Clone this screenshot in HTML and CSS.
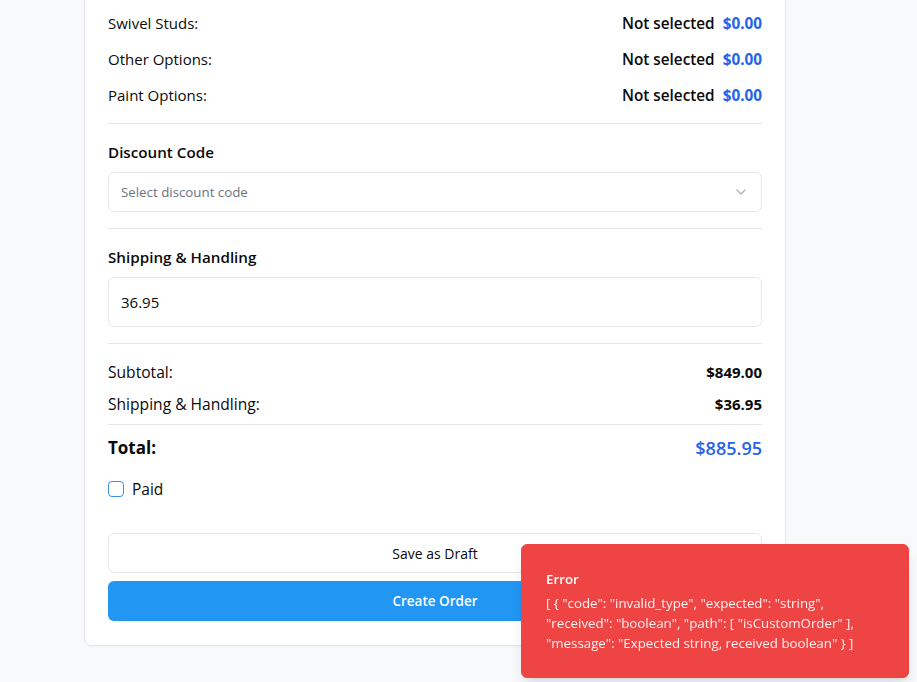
FILE: index.html
```html
<!DOCTYPE html>
<html lang="en">
<head>
<meta charset="utf-8">
<title>Order Summary</title>
<link rel="stylesheet" href="styles.css">
</head>
<body>
<div class="page">
  <div class="card">
    <div class="options">
      <div class="row">
        <span class="label">Swivel Studs:</span>
        <span class="value"><span class="sel">Not selected</span><span class="price">$0.00</span></span>
      </div>
      <div class="row">
        <span class="label">Other Options:</span>
        <span class="value"><span class="sel">Not selected</span><span class="price">$0.00</span></span>
      </div>
      <div class="row">
        <span class="label">Paint Options:</span>
        <span class="value"><span class="sel">Not selected</span><span class="price">$0.00</span></span>
      </div>
    </div>

    <div class="section">
      <div class="field-label">Discount Code</div>
      <div class="select">
        <span class="placeholder">Select discount code</span>
        <svg class="chevron" width="16" height="16" viewBox="0 0 24 24" fill="none" stroke="currentColor" stroke-width="2" stroke-linecap="round" stroke-linejoin="round"><path d="m6 9 6 6 6-6"/></svg>
      </div>
    </div>

    <div class="section">
      <div class="field-label">Shipping &amp; Handling</div>
      <div class="input">36.95</div>
    </div>

    <div class="totals">
      <div class="trow"><span>Subtotal:</span><span class="amt">$849.00</span></div>
      <div class="trow"><span>Shipping &amp; Handling:</span><span class="amt">$36.95</span></div>
    </div>
    <div class="total-row"><span>Total:</span><span class="total-amt">$885.95</span></div>

    <label class="paid"><span class="checkbox"></span><span>Paid</span></label>

    <div class="actions">
      <button class="btn btn-outline">Save as Draft</button>
      <button class="btn btn-primary">Create Order</button>
    </div>
  </div>
</div>

<div class="toast">
  <div class="toast-title">Error</div>
  <div class="toast-desc">[ { "code": "invalid_type", "expected": "string", "received": "boolean", "path": [ "isCustomOrder" ], "message": "Expected string, received boolean" } ]</div>
</div>
</body>
</html>
```

FILE: styles.css
```css
* { box-sizing: border-box; }
html, body { margin: 0; padding: 0; }
body {
  background: #f8f9fb;
  font-family: "Open Sans", "Noto Sans", sans-serif;
  color: #0a0a0a;
  font-size: 16px;
  height: 682px;
  overflow: hidden;
}
.page {
  padding-left: 84px;
}
.card {
  width: 702px;
  background: #fff;
  border: 1px solid #e5e7eb;
  border-top: none;
  border-radius: 0 0 8px 8px;
  box-shadow: 0 1px 2px rgba(0,0,0,0.04);
  padding: 11px 23px 24px;
}
.options {
  display: flex;
  flex-direction: column;
  gap: 12px;
  padding-bottom: 16px;
  border-bottom: 1px solid #e5e7eb;
}
.row {
  display: flex;
  justify-content: space-between;
  align-items: center;
  line-height: 24px;
}
.label { font-size: 15px; }
.value { display: flex; gap: 8px; font-weight: 600; font-size: 15.3px; }
.price { color: #2563eb; font-weight: 700; }
.section {
  padding: 16px 0;
  border-bottom: 1px solid #e5e7eb;
}
.field-label {
  font-size: 15.2px;
  font-weight: 600;
  line-height: 24px;
  margin-bottom: 8px;
}
.select {
  height: 40px;
  border: 1px solid #e5e7eb;
  border-radius: 6px;
  display: flex;
  align-items: center;
  justify-content: space-between;
  padding: 0 12px;
}
.placeholder { font-size: 13.3px; color: #6b7280; }
.chevron { color: #9ca3af; opacity: 0.8; }
.input {
  height: 50px;
  border: 1px solid #e5e7eb;
  border-radius: 6px;
  display: flex;
  align-items: center;
  padding: 0 12px;
  font-size: 15px;
}
.totals {
  padding: 16px 0 8px;
  display: flex;
  flex-direction: column;
  gap: 8px;
  border-bottom: 1px solid #e5e7eb;
}
.trow {
  display: flex;
  justify-content: space-between;
  line-height: 24px;
  font-size: 15.6px;
  font-weight: 500;
}
.amt { font-weight: 700; font-size: 15px; }
.total-row {
  display: flex;
  justify-content: space-between;
  align-items: center;
  line-height: 28px;
  padding-top: 9px;
  font-size: 17px;
  font-weight: 700;
}
.total-amt { color: #2563eb; font-weight: 600; font-size: 18px; }
.paid {
  display: flex;
  align-items: center;
  gap: 8px;
  margin-top: 15px;
  line-height: 24px;
  font-size: 15.5px;
  font-weight: 500;
}
.checkbox {
  width: 16px;
  height: 16px;
  border: 1.5px solid #3b8fe8;
  border-radius: 4px;
}
.actions {
  margin-top: 32px;
  display: flex;
  flex-direction: column;
  gap: 8px;
}
.btn {
  height: 40px;
  border-radius: 6px;
  font-family: inherit;
  font-size: 14px;
  font-weight: 500;
  cursor: pointer;
}
.btn-outline {
  background: #fff;
  border: 1px solid #e5e7eb;
  color: #0a0a0a;
}
.btn-primary {
  background: #2196f3;
  border: none;
  color: #fff;
  font-size: 13.5px;
  font-weight: 600;
}
.toast {
  position: fixed;
  right: 8px;
  bottom: 4px;
  width: 388px;
  background: #ef4444;
  border: 1px solid #ef4444;
  border-radius: 6px;
  color: #fff;
  padding: 24px 32px 24px 24px;
  box-shadow: 0 10px 15px -3px rgba(0,0,0,0.1), 0 4px 6px -4px rgba(0,0,0,0.1);
  font-size: 13.3px;
  line-height: 20px;
}
.toast-title { font-weight: 600; }
.toast-desc { margin-top: 4px; opacity: 0.92; }
```
